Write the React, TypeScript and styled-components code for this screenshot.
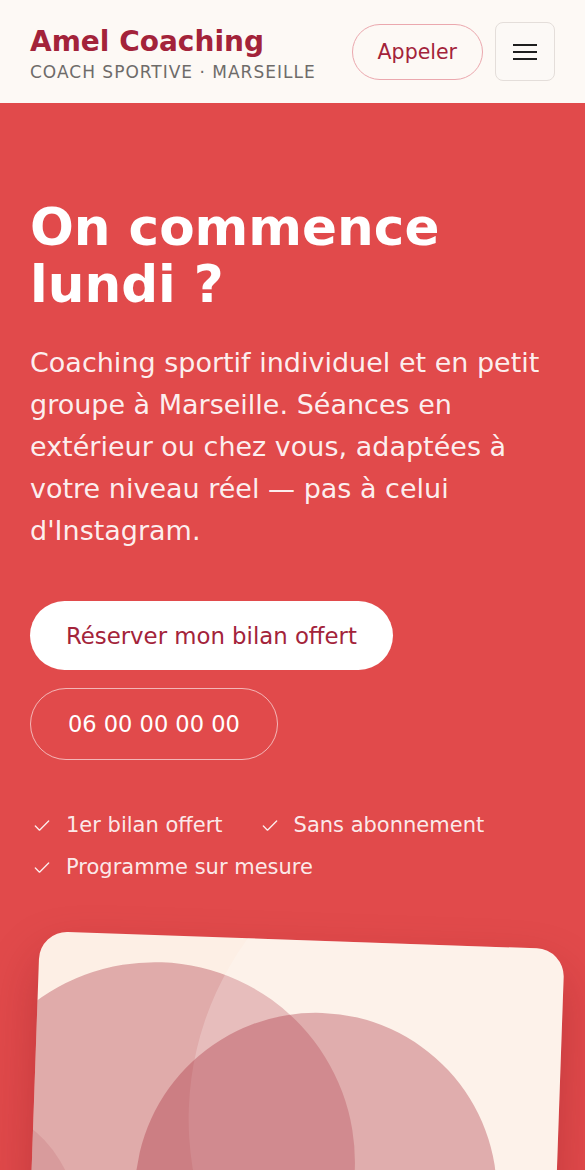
import styled, { createGlobalStyle } from 'styled-components'
import { Check } from 'lucide-react'

const BRAND = '#a3233a'
const HERO_RED = '#e14a4b'
const CREAM = '#fdf9f5'

const GlobalStyle = createGlobalStyle`
	html, body {
		margin: 0;
		padding: 0;
		background: ${HERO_RED};
		font-family: "DejaVu Sans", "Noto Sans", sans-serif;
		overflow-x: hidden;
	}
	* {
		box-sizing: border-box;
	}
`

const Header = styled.header`
	height: 103px;
	padding: 0 30px;
	background: ${CREAM};
	display: flex;
	align-items: center;
	justify-content: space-between;
`
const Brand = styled.div`
	display: flex;
	flex-direction: column;
	gap: 3px;
	padding-top: 7px;
`
const BrandName = styled.div`
	font-size: 28px;
	font-weight: bold;
	line-height: 30px;
	color: ${BRAND};
`
const BrandTag = styled.div`
	font-size: 17px;
	line-height: 24px;
	letter-spacing: 1px;
	color: #6e6b69;
	text-transform: uppercase;
`
const Actions = styled.div`
	display: flex;
	align-items: center;
	gap: 12px;
`
const CallButton = styled.button`
	height: 56px;
	padding: 0 25px;
	border-radius: 999px;
	border: 1.5px solid #eba8ae;
	background: transparent;
	color: ${BRAND};
	font-family: inherit;
	font-size: 20.5px;
`
const MenuButton = styled.button`
	width: 60px;
	height: 59px;
	border-radius: 8px;
	border: 1px solid #e4deda;
	background: #fcf9f6;
	display: flex;
	flex-direction: column;
	align-items: center;
	justify-content: center;
	gap: 5px;
	padding: 0;

	span {
		display: block;
		width: 24px;
		height: 2px;
		background: #1e1e1e;
	}
`

const Hero = styled.section`
	padding: 96px 30px 80px;
	background: ${HERO_RED};
	color: #fff;
`
const Title = styled.h1`
	margin: 0;
	font-size: 51.6px;
	line-height: 57px;
	font-weight: bold;
	color: #fff;
`
const Lead = styled.p`
	margin: 29px 0 0;
	font-size: 27px;
	line-height: 42px;
	color: rgba(255, 255, 255, 0.92);
`
const ButtonStack = styled.div`
	margin-top: 49px;
	display: flex;
	flex-direction: column;
	align-items: flex-start;
	gap: 18px;
`
const PrimaryButton = styled.a`
	height: 69px;
	padding: 0 36px;
	border-radius: 999px;
	background: #fff;
	color: ${BRAND};
	font-size: 22.8px;
	display: inline-flex;
	align-items: center;
	text-decoration: none;
`
const GhostButton = styled.a`
	height: 72px;
	padding: 0 37px;
	border-radius: 999px;
	border: 1px solid rgba(255, 255, 255, 0.6);
	color: #fff;
	font-size: 22.5px;
	display: inline-flex;
	align-items: center;
	text-decoration: none;
`
const Perks = styled.ul`
	list-style: none;
	margin: 50px 0 0;
	padding: 0;
	display: flex;
	flex-wrap: wrap;
	column-gap: 35px;
	row-gap: 11px;
`
const Perk = styled.li`
	display: flex;
	align-items: center;
	gap: 14px;
	font-size: 21px;
	line-height: 31px;
	color: rgba(255, 255, 255, 0.9);

	svg {
		flex: none;
		margin-left: 2px;
	}
`
const Visual = styled.div`
	margin-top: 57px;
	width: 100%;
	height: 560px;
	border-radius: 28px;
	background: #fdefe5;
	overflow: hidden;
	transform: rotate(2deg);
	box-shadow: 0 24px 50px rgba(110, 15, 25, 0.28);

	svg {
		display: block;
	}
`

const perks = ['1er bilan offert', 'Sans abonnement', 'Programme sur mesure']

export default function App() {
	return (
		<>
			<GlobalStyle />
			<Header>
				<Brand>
					<BrandName>Amel Coaching</BrandName>
					<BrandTag>Coach sportive · Marseille</BrandTag>
				</Brand>
				<Actions>
					<CallButton>Appeler</CallButton>
					<MenuButton aria-label="Menu">
						<span />
						<span />
						<span />
					</MenuButton>
				</Actions>
			</Header>
			<Hero>
				<Title>On commence lundi ?</Title>
				<Lead>
					Coaching sportif individuel et en petit groupe à Marseille. Séances en extérieur ou chez
					vous, adaptées à votre niveau réel — pas à celui d'Instagram.
				</Lead>
				<ButtonStack>
					<PrimaryButton href="#">Réserver mon bilan offert</PrimaryButton>
					<GhostButton href="#">06 00 00 00 00</GhostButton>
				</ButtonStack>
				<Perks>
					{perks.map((p) => (
						<Perk key={p}>
							<Check size={20} strokeWidth={1.6} />
							{p}
						</Perk>
					))}
				</Perks>
				<Visual>
					<svg width="100%" height="100%" viewBox="0 0 525 560" preserveAspectRatio="none">
						<circle cx={123} cy={227} r={200} fill="rgba(167, 41, 57, 0.34)" />
						<circle cx={460} cy={172} r={305} fill="rgba(255, 255, 255, 0.22)" />
						<circle cx={285} cy={253} r={181} fill="rgba(167, 41, 57, 0.34)" />
						<circle cx={-80} cy={301} r={130} fill="rgba(167, 41, 57, 0.12)" />
					</svg>
				</Visual>
			</Hero>
		</>
	)
}
